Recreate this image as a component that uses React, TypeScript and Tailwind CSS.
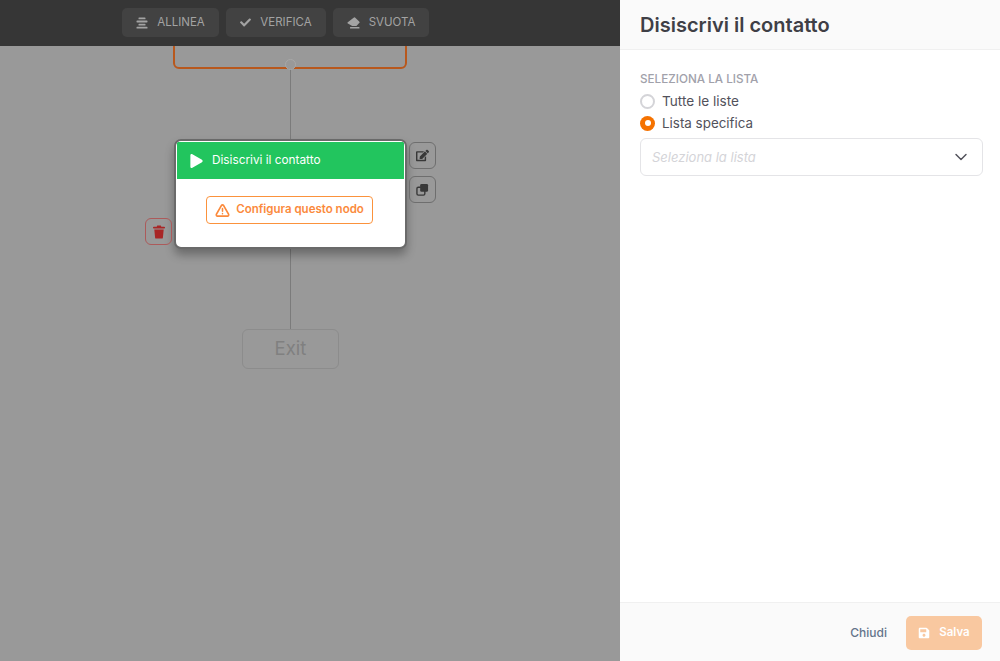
import { FaCheck, FaEdit, FaSave, FaPlay } from 'react-icons/fa';
import { ChevronDown, TriangleAlert } from 'lucide-react';

function ToolButton({ icon, label, width }: { icon: React.ReactNode; label: string; width: string }) {
    return (
        <div className={`flex h-[29px] items-center justify-center gap-[9px] rounded-[5px] bg-[#424242] text-[11.5px] text-[#a3a3a3] ${width}`}>
            {icon}
            <span>{label}</span>
        </div>
    );
}

function AlignIcon() {
    return (
        <svg viewBox="0 0 12 12" className="h-[12px] w-[12px]" fill="currentColor">
            <rect x="2.5" y="0.5" width="7" height="1.8" rx="0.6" />
            <rect x="0.5" y="3.6" width="11" height="1.8" rx="0.6" />
            <rect x="2.5" y="6.7" width="7" height="1.8" rx="0.6" />
            <rect x="0.5" y="9.8" width="11" height="1.8" rx="0.6" />
        </svg>
    );
}

function EraserIcon() {
    return (
        <svg viewBox="0 0 13 12" className="h-[12px] w-[13px]" fill="currentColor">
            <path d="M6.6.8a1.2 1.2 0 0 1 1.7 0l3.9 3.6a1.2 1.2 0 0 1 0 1.7L9.4 9H5.2L.9 6.6a.9.9 0 0 1-.1-1.4z" />
            <rect x="3" y="10" width="9.5" height="1.5" rx="0.5" />
        </svg>
    );
}

function CloneIcon() {
    return (
        <svg viewBox="0 0 14 14" className="h-[13px] w-[13px]" fill="none">
            <rect x="1" y="4.5" width="8.5" height="8.5" rx="1.5" stroke="currentColor" strokeWidth="1.5" />
            <rect x="4.5" y="1" width="8.5" height="8.5" rx="1.5" fill="currentColor" />
        </svg>
    );
}

function TrashIcon() {
    return (
        <svg viewBox="0 0 12 14" className="h-[14px] w-[12px]" fill="currentColor">
            <path d="M4.2.6h3.6l.5 1.2h3a.6.6 0 0 1 0 1.6H.7a.6.6 0 0 1 0-1.6h3z" />
            <path d="M1.3 4.4h9.4l-.8 8.3a1 1 0 0 1-1 .9H3.1a1 1 0 0 1-1-.9z" />
        </svg>
    );
}

function Canvas() {
    return (
        <div className="relative h-full w-[620px] overflow-hidden bg-[#999999] font-['Inter',sans-serif]">
            {/* previous node, cut off by the toolbar */}
            <div className="absolute left-[173px] top-[30px] h-[39px] w-[234px] rounded-b-[6px] border-2 border-[#b8581d]"></div>
            <div className="absolute left-[289.5px] top-[68px] h-[72px] w-[1.5px] bg-[#7b7b7b]"></div>
            <div className="absolute left-[285px] top-[59px] h-[11px] w-[11px] rounded-full border border-[#a8a8a8] bg-[#999999]"></div>
            <div className="absolute left-[289.5px] top-[247px] h-[83px] w-[1.5px] bg-[#7b7b7b]"></div>

            {/* selected node */}
            <div className="absolute left-[174px] top-[139px] h-[110px] w-[233px] overflow-hidden rounded-[7px] border-2 border-[#6a6a6a] bg-white p-px shadow-[0_6px_10px_rgba(0,0,0,0.3)]">
                <div className="flex h-[37px] items-center bg-[#22c55e] pl-[13px] text-[11.8px] font-normal text-white">
                    <FaPlay className="mr-[9px] h-[14px] w-[13px]" />
                    Disiscrivi il contatto
                </div>
                <div className="flex justify-center pr-[2px] pt-[17px]">
                    <div className="flex h-[28px] w-[167px] items-center justify-center gap-[6px] rounded-[4px] border border-[#fb923c] text-[11.5px] font-semibold text-[#fb8a3c]">
                        <TriangleAlert className="h-[15px] w-[15px]" strokeWidth={2.5} />
                        Configura questo nodo
                    </div>
                </div>
            </div>

            <div className="absolute left-[409px] top-[142px] flex h-[27px] w-[27px] items-center justify-center rounded-[6px] border border-[#6e6e6e] text-[#383838]">
                <FaEdit className="h-[13px] w-[13px]" />
            </div>
            <div className="absolute left-[409px] top-[176px] flex h-[27px] w-[27px] items-center justify-center rounded-[6px] border border-[#6e6e6e] text-[#383838]">
                <CloneIcon />
            </div>
            <div className="absolute left-[145px] top-[218px] flex h-[27px] w-[27px] items-center justify-center rounded-[6px] border border-[#ac5a5a] text-[#a82626]">
                <TrashIcon />
            </div>

            {/* exit node */}
            <div className="absolute left-[242px] top-[329px] flex h-[40px] w-[97px] items-center justify-center rounded-[6px] border border-[#8c8c8c] text-[18.5px] text-[#808080]">
                Exit
            </div>

            {/* toolbar */}
            <div className="absolute inset-x-0 top-0 flex h-[46px] gap-[7px] bg-[#363636] pl-[122px] pt-[8px]">
                <ToolButton icon={<AlignIcon />} label="ALLINEA" width="w-[97px]" />
                <ToolButton icon={<FaCheck className="h-[11px] w-[11px]" />} label="VERIFICA" width="w-[100px]" />
                <ToolButton icon={<EraserIcon />} label="SVUOTA" width="w-[96px]" />
            </div>
        </div>
    );
}

function Panel() {
    return (
        <div className="flex h-full w-[380px] flex-col bg-white font-['Inter',sans-serif]">
            <div className="flex h-[50px] items-center border-b border-[#f0f0f0] bg-[#fafafa] px-5 text-xl font-semibold text-[#3f3f46]">
                Disiscrivi il contatto
            </div>
            <div className="flex-1 px-5 pt-[22px]">
                <div className="text-[11.7px] font-medium leading-[14px] text-[#a1a1aa]">SELEZIONA LA LISTA</div>
                <div className="mt-[4px] flex h-[22px] items-center gap-[7px] text-[13.6px] text-[#52525b]">
                    <span className="h-[15px] w-[15px] rounded-full border-2 border-[#d4d4d8]"></span>
                    Tutte le liste
                </div>
                <div className="flex h-[22px] items-center gap-[7px] text-[13.4px] text-[#52525b]">
                    <span className="flex h-[15px] w-[15px] items-center justify-center rounded-full bg-[#f57200]">
                        <span className="h-[6px] w-[6px] rounded-full bg-white"></span>
                    </span>
                    Lista specifica
                </div>
                <div className="mt-[4px] flex h-[38px] w-[343px] items-center justify-between rounded-[6px] border border-[#e4e4e7] pl-[11px] pr-[11px] text-[13px] italic text-[#d4d4d8]">
                    <span className="pt-px">Seleziona la lista</span>
                    <ChevronDown className="h-[20px] w-[20px] text-[#52525b]" strokeWidth={1.75} />
                </div>
            </div>
            <div className="flex h-[59px] items-center justify-end border-t border-[#f0f0f0] bg-[#fafafa] pr-[18px] pt-[2px]">
                <span className="mr-[19px] text-xs font-medium text-[#64748b]">Chiudi</span>
                <div className="flex h-[34px] w-[76px] items-center justify-center gap-[9px] rounded-[5px] bg-[#f9c8a0] text-[11.5px] font-semibold text-white">
                    <FaSave className="h-[12px] w-[12px]" />
                    Salva
                </div>
            </div>
        </div>
    );
}

export default function App() {
    return (
        <div className="flex h-[661px] w-[1000px] overflow-hidden">
            <Canvas />
            <Panel />
        </div>
    );
}
